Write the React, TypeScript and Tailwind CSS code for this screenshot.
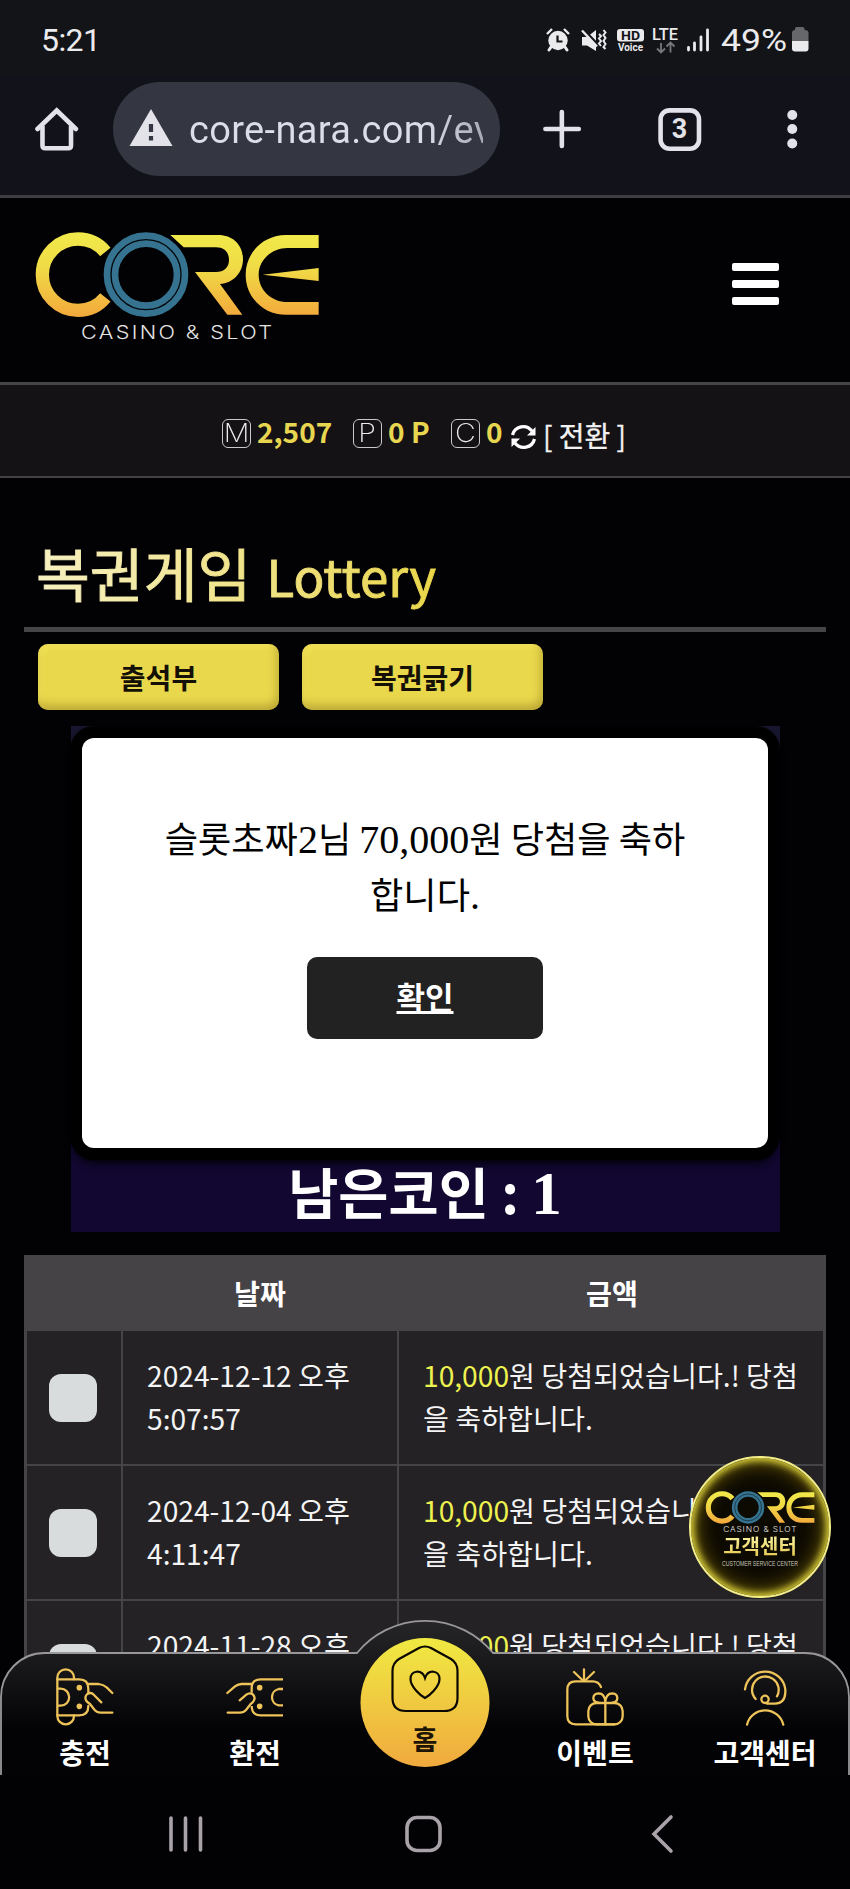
import type { ReactNode } from "react";

const rows = [
  { id: 1, date: "2024-12-12 오후", time: "5:07:57", amount: "10,000" },
  { id: 2, date: "2024-12-04 오후", time: "4:11:47", amount: "10,000" },
  { id: 3, date: "2024-11-28 오후", time: "6:32:10", amount: "10,000" },
];

const CoreLogo = ({ id, className }: { id: string; className?: string }) => (
  <svg viewBox="105 126 852 336" className={className}>
    <defs>
      <linearGradient id={id} gradientUnits="userSpaceOnUse" x1="0" y1="128" x2="0" y2="382">
        <stop offset="0" stopColor="#f1ea4a" />
        <stop offset="0.4" stopColor="#f0dc46" />
        <stop offset="1" stopColor="#f3a83c" />
      </linearGradient>
    </defs>
    <path
      d="M316 186 C296 161 267 147 234 147 C175 147 127 195 127 254 C127 313 175 361 234 361 C267 361 296 347 316 322"
      fill="none"
      stroke={`url(#${id})`}
      strokeWidth="40"
    />
    <path
      d="M511 135 H655 C700 135 729 166 729 208 C729 248 700 280 660 282 L727 374 H682 L585 246 H648 C672 246 687 232 687 209 C687 187 672 172 648 172 H551 Z"
      fill={`url(#${id})`}
    />
    <path
      d="M956 135 H858 C790 135 737 188 737 254 C737 322 790 374 858 374 H956 V336 H862 C815 336 776 300 776 254 C776 210 815 174 862 174 H956 Z M788 254 L956 234 V273 Z"
      fill={`url(#${id})`}
    />
    <circle cx="438" cy="254" r="105" fill="none" stroke="#357391" strokeWidth="44" />
    <circle cx="438" cy="254" r="105" fill="none" stroke="#04090c" strokeWidth="4" />
    <text
      x="243"
      y="447"
      textLength="580"
      lengthAdjust="spacingAndGlyphs"
      letterSpacing="6"
      fontSize="55"
      className="fill-[#e4e4e4] font-['Inter','Liberation_Sans',sans-serif] font-light"
    >
      CASINO &amp; SLOT
    </text>
  </svg>
);

const StatusBar = () => (
  <div className="flex h-[74px] items-center justify-between pt-1.5 pr-[38px] pl-[41px] font-['Roboto',sans-serif] text-[#ebebee]">
    <span className="text-[32px] leading-none tracking-[-0.6px]">5:21</span>
    <svg width="267" height="36" viewBox="0 -4 267 36" fill="currentColor">
      {/* alarm */}
      <circle cx="13" cy="14.5" r="9.7" />
      <path d="M2 8 L7 3 M24 8 L19 3" stroke="currentColor" strokeWidth="2.4" />
      <path d="M6 21 L4 24 M20 21 L22 24" stroke="currentColor" strokeWidth="3" strokeLinecap="round" />
      <path d="M12.5 9.5 V15.5 H17.5" stroke="#131417" strokeWidth="2.2" fill="none" />
      {/* muted, vibrating */}
      <path d="M37 11 H42 L51 4 V25 L42 19.5 H37 Z" />
      <path d="M37.5 2.5 L54 20" stroke="#131417" strokeWidth="2.6" />
      <path d="M37 4.5 L52 20.5" stroke="currentColor" strokeWidth="2.4" />
      <path
        d="M54 8 l2 2 -2 2.500 2 2.500 -2 2.500 2 2.500 M58.500 4 l2 2.500 -2 2.500 2 3 -2 3 2 3 -2 3 2 2"
        stroke="currentColor"
        strokeWidth="2"
        fill="none"
      />
      {/* HD voice */}
      <rect x="72" y="3" width="27" height="12.5" rx="3" />
      <text x="76" y="13.5" fontSize="12" fontWeight="700" textLength="19" lengthAdjust="spacingAndGlyphs" fill="#131417">
        HD
      </text>
      <text x="73" y="25" fontSize="10.5" fontWeight="700" textLength="25" lengthAdjust="spacingAndGlyphs">
        Voice
      </text>
      {/* network */}
      <text x="107" y="13.5" fontSize="16.5" fontWeight="500" textLength="26" lengthAdjust="spacingAndGlyphs">
        LTE
      </text>
      <path
        d="M116 17 V26 M112 22.5 L116 26.5 L120 22.5 M125.500 26.5 V17 M121.500 20.500 L125.500 16.500 L129.500 20.500"
        stroke="#77787b"
        strokeWidth="1.8"
        fill="none"
      />
      <path
        d="M143.500 21.500 V24 M149.500 17 V24 M156 11 V24 M162.500 4 V24"
        stroke="currentColor"
        strokeWidth="2.800"
        strokeLinecap="round"
      />
      <text x="176" y="25" fontSize="31.5" textLength="66" lengthAdjust="spacingAndGlyphs">
        49%
      </text>
      {/* battery */}
      <path d="M247 15 V7 Q247 4 250 4 V2.500 Q250 1 252 1 H257.500 Q259.500 1 259.500 2.500 V4 Q263.500 4 263.500 7 V15 Z" fill="#66676a" />
      <path d="M247 15 H263.500 V22.500 Q263.500 25.500 260.500 25.500 H250 Q247 25.500 247 22.500 Z" />
    </svg>
  </div>
);

const BrowserBar = () => (
  <div className="flex h-[124px] items-start border-b-[3px] border-[#3e3d41] bg-[#12131a] pt-2 pl-[35px] text-[#e3e2e9]">
    <svg width="44" height="94" viewBox="0 0 44 94" fill="none" stroke="currentColor" strokeWidth="4.600">
      <path d="M2.500 47 L21.800 28.500 L41 47" strokeLinecap="round" />
      <path d="M7.500 44 V63.500 Q7.500 66.300 10.300 66.300 H33.300 Q36.100 66.300 36.100 63.500 V44" />
    </svg>
    <div className="ml-[34px] flex h-[94px] w-[388px] items-center rounded-full bg-[#343741] pl-4">
      <svg width="44" height="38" viewBox="0 0 44 38" className="-mt-1 shrink-0">
        <path d="M22 1 L43.500 38 H0.500 Z" fill="currentColor" />
        <path d="M22 16 V24 M22 28 V32.500" stroke="#343741" strokeWidth="4.200" />
      </svg>
      <div className="ml-4 w-[294px] overflow-hidden bg-[linear-gradient(to_right,#dcdde9_80%,#a9abb7)] bg-clip-text pt-0.5 font-['Roboto',sans-serif] text-[38px] leading-[60px] tracking-[0.35px] whitespace-nowrap text-transparent">
        core-nara.com/event
      </div>
    </div>
    <svg width="350" height="94" viewBox="501 82 350 94" fill="none" stroke="currentColor" className="ml-px">
      <path d="M545.500 129 H579 M562 112 V146" strokeWidth="4.600" strokeLinecap="round" />
      <rect x="661" y="110.300" width="38.500" height="38.500" rx="9" strokeWidth="4.600" />
      <text
        x="680"
        y="138.500"
        fontSize="27"
        textAnchor="middle"
        stroke="none"
        className="fill-[#e3e2e9] font-['Roboto',sans-serif] font-bold"
      >
        3
      </text>
      <g fill="currentColor" stroke="none">
        <circle cx="793" cy="115" r="5" />
        <circle cx="793" cy="129" r="5" />
        <circle cx="793" cy="143.500" r="5" />
      </g>
    </svg>
  </div>
);

const SiteHeader = () => (
  <header className="flex h-[187px] items-start justify-between border-b-[3px] border-[#454447] pr-[71px] pl-[35px]">
    <CoreLogo id="core-header" className="mt-[34px] h-[112px] w-[284px]" />
    <button className="mt-[65px] flex w-[47px] flex-col gap-[9px]">
      <span className="h-2 w-full rounded-xs bg-white" />
      <span className="h-2 w-full rounded-xs bg-white" />
      <span className="h-2 w-full rounded-xs bg-white" />
    </button>
  </header>
);

const CoinBadge = ({ letter }: { letter: string }) => (
  <span className="mt-[5px] flex size-[29px] items-center justify-center rounded-md border-[1.5px] border-[#c9c9cb] font-['Inter',sans-serif] text-[26px] leading-none font-extralight text-[#ececec]">
    <span className="inline-block scale-x-110">{letter}</span>
  </span>
);

const BalanceBar = () => (
  <div className="flex h-[93px] items-center border-b-2 border-[#424144] bg-[#141215] pl-[222px] text-[28px] leading-[40px] text-[#e8d651]">
    <CoinBadge letter="M" />
    <b className="ml-[6px] w-[96px]">2,507</b>
    <CoinBadge letter="P" />
    <b className="ml-[6px] w-[63px]">0 P</b>
    <CoinBadge letter="C" />
    <b className="ml-[6px] w-[24px]">0</b>
    <svg width="27" height="26" viewBox="0 0 27 26" fill="none" stroke="#fff" strokeWidth="3.200" className="mt-3">
      <path d="M2.500 11 A11 11 0 0 1 22 7 M24.500 15 A11 11 0 0 1 5 19" />
      <path d="M25.500 3 V11.500 H17 Z M1.500 23 V14.500 H10 Z" fill="#fff" stroke="none" />
    </svg>
    <span className="mt-2 ml-[6px] text-[#f2f2f2] [-webkit-text-stroke:0.3px]">[ 전환 ]</span>
  </div>
);

const YellowButton = ({ children }: { children: ReactNode }) => (
  <button className="h-[66px] w-[241px] rounded-[10px] bg-[#e9d84c] text-[28px] leading-none font-bold text-[#141005] shadow-[inset_-2px_-5px_8px_rgba(120,95,20,0.4),inset_3px_3px_6px_rgba(255,240,100,0.6)]">
    {children}
  </button>
);

const HistoryTable = () => (
  <div className="mx-6 mt-[23px] border-x-[3px] border-[#454447] bg-[#242225] text-[28.200px] leading-[42.500px] text-[#f4f4f5]">
    <div className="-mx-[3px] grid h-[76px] grid-cols-[98px_276px_1fr] items-center bg-[#454346] pt-px text-center font-bold text-white">
      <span />
      <span>날짜</span>
      <span>금액</span>
    </div>
    {rows.map((row) => (
      <div key={row.id} className="grid h-[135px] grid-cols-[96px_276px_1fr] border-b-2 border-[#454447]">
        <div className="flex items-center justify-center border-r-2 border-[#454447] pr-0.5">
          <span className="size-12 rounded-xl bg-[#d9dcdd]" />
        </div>
        <div className="border-r-2 border-[#454447] pt-[23px] pl-6">
          {row.date}
          <br />
          {row.time}
        </div>
        <div className="pt-[23px] pl-6 whitespace-nowrap">
          <span className="text-[#eef24f]">{row.amount}</span>원 당첨되었습니다.! 당첨
          <br />을 축하합니다.
        </div>
      </div>
    ))}
  </div>
);

const WinModal = () => (
  <div className="absolute top-[540px] left-[82px] flex h-[410px] w-[686px] flex-col items-center rounded-xl bg-white shadow-[0_0_1px_12px_#000,0_6px_8px_8px_#000]">
    <p className="mt-[72px] text-center text-[36.200px] leading-[55.500px] text-black">
      슬롯초짜
      <Serif>2</Serif>님 <Serif>70,000</Serif>원 당첨을 축하
      <br />
      합니다<Serif>.</Serif>
    </p>
    <button className="mt-[36px] h-[82px] w-[236px] rounded-[10px] bg-[#222] pb-1 text-[31px] font-bold text-white underline decoration-3 underline-offset-2">
      확인
    </button>
  </div>
);

const Serif = ({ children }: { children: ReactNode }) => (
  <span className="font-['Liberation_Serif',serif] text-[40px] leading-[0]">{children}</span>
);

const SupportBadge = () => (
  <div className="absolute top-[1258px] left-[689px] flex size-[142px] flex-col items-center rounded-full border-2 border-[#f3ee8a] bg-[#0d0a02] pt-[33px] shadow-[inset_0_0_7px_3px_#d8cf3a,inset_0_0_18px_8px_rgba(120,100,10,0.7)]">
    <CoreLogo id="core-badge" className="h-[43px] w-[110px]" />
    <span className="bg-linear-to-b from-[#fdf6a8] to-[#e3c545] bg-clip-text text-[20px] leading-[24px] font-bold text-transparent">
      고객센터
    </span>
    <svg width="80" height="11" viewBox="0 0 80 11">
      <text
        x="2"
        y="8"
        fontSize="6.500"
        textLength="76"
        lengthAdjust="spacingAndGlyphs"
        fill="#c9c6b8"
        className="font-['Liberation_Sans',sans-serif]"
      >
        CUSTOMER SERVICE CENTER
      </text>
    </svg>
  </div>
);

const NavIcon = ({ children, viewBox }: { children: ReactNode; viewBox: string }) => (
  <svg
    width="58"
    height="58"
    viewBox={viewBox}
    fill="none"
    stroke="#eec45a"
    strokeWidth="6.800"
    strokeLinecap="round"
    strokeLinejoin="round"
  >
    {children}
  </svg>
);

const navItems = [
  {
    label: "충전",
    icon: (
      <NavIcon viewBox="170 206 174 174">
        <path d="M174 235 A25 25 0 0 1 224 235 V240 M174 235 V350 A25 25 0 0 0 224 350 V348" />
        <path d="M174 240 H240 Q267 240 267 268 V280 M174 348 H240 Q267 348 267 320" />
        <path d="M176 268 H184 A25 25 0 0 1 184 319 H176" />
        <path d="M265 254 H298 Q312 256 322 264 L339 281" />
        <path d="M306 309 L281 284 Q273 278 264 284 Q255 292 260 303 Q263 308 272 314 L286 332 Q293 340 304 340 H339" />
        <circle cx="240" cy="265" r="5" fill="#eec45a" />
        <circle cx="240" cy="321" r="5" fill="#eec45a" />
      </NavIcon>
    ),
  },
  {
    label: "환전",
    icon: (
      <NavIcon viewBox="678 206 174 174">
        <path d="M849 240 H782 Q755 240 755 266 V280 M849 348 H782 Q755 348 755 320" strokeLinecap="butt" />
        <path d="M849 269 H836 A25 25 0 0 0 836 318 H849" strokeLinecap="butt" />
        <path d="M682 281 L704 262 Q712 255 724 254 H754" />
        <path d="M719 303 L739 286 Q748 279 757 284 Q767 292 762 303 Q760 308 752 314 L738 332 Q731 340 720 340 H683" />
        <circle cx="779" cy="265" r="5" fill="#eec45a" />
        <circle cx="779" cy="321" r="5" fill="#eec45a" />
      </NavIcon>
    ),
  },
  { label: "홈", icon: null },
  {
    label: "이벤트",
    icon: (
      <NavIcon viewBox="424 206 174 174">
        <path d="M478 210 V242 M448 218 L473 242 M508 218 L483 242" />
        <path d="M529 263 Q522 246 504 246 H453 Q428 246 428 271 V350 Q428 375 453 375 H570" />
        <rect x="491" y="311" width="103" height="64" rx="24" />
        <path d="M542 311 V375 M542 308 Q540 282 522 282 Q506 283 506 297 Q507 308 522 310 M542 308 Q544 282 563 282 Q578 283 578 297 Q577 308 563 310" />
      </NavIcon>
    ),
  },
  {
    label: "고객센터",
    icon: (
      <NavIcon viewBox="933 206 174 174">
        <path d="M960 270 A61 61 0 0 1 1081 270 V280 Q1079 313 1050 313 H1026" />
        <path d="M992 299 A40 40 0 1 1 1056 291" />
        <circle cx="1020" cy="300" r="11" />
        <path d="M966 376 A56 56 0 0 1 1075 376" />
      </NavIcon>
    ),
  },
];

const BottomNav = () => (
  <nav className="absolute bottom-0 left-0 h-[156px] w-full">
    <svg width="850" height="156" viewBox="0 0 850 156" className="absolute inset-0">
      <defs>
        <linearGradient id="nav-bg" x1="0" y1="0" x2="0" y2="1">
          <stop offset="0" stopColor="#262528" />
          <stop offset="0.35" stopColor="#151416" />
          <stop offset="0.7" stopColor="#030204" />
        </linearGradient>
        <linearGradient id="nav-home" x1="0" y1="0" x2="0" y2="1">
          <stop offset="0" stopColor="#f0ea42" />
          <stop offset="1" stopColor="#f0a93e" />
        </linearGradient>
      </defs>
      <path
        d="M1 156 V78 C1 54 20 34 45 34 H357 A88 88 0 0 1 493 34 H805 C830 34 849 54 849 78 V156"
        fill="url(#nav-bg)"
        stroke="#98979a"
        strokeWidth="1.800"
      />
      <circle cx="425" cy="83.500" r="64.500" fill="url(#nav-home)" />
    </svg>
    <div className="relative grid h-full grid-cols-5 text-[28px] leading-[40px] font-bold text-white">
      {navItems.map((item) =>
        item.icon ? (
          <a key={item.label} className="flex flex-col items-center pt-[49px]">
            {item.icon}
            <span className="mt-[6px]">{item.label}</span>
          </a>
        ) : (
          <a key={item.label} className="flex flex-col items-center pt-[26px] text-[27px] text-[#1c1404]">
            <svg width="68" height="68" viewBox="0 0 68 68" fill="none" stroke="#0a0700" strokeWidth="2.200">
              <path d="M28 3 Q34 0 40 3 L60 14 Q66.500 18 66.500 26 V53 Q66.500 66 53 66 H15 Q1.500 66 1.500 53 V26 Q1.500 18 8 14 Z" />
              <path d="M34 53 C30 51 19.500 42 19.500 34 C19.500 25 31 24 34 33 C37 24 48.500 25 48.500 34 C48.500 42 38 51 34 53 Z" />
            </svg>
            <span className="mt-[6px]">{item.label}</span>
          </a>
        )
      )}
    </div>
  </nav>
);

const SystemNav = () => (
  <div className="h-[114px] bg-[#020103]">
    <svg width="850" height="114" viewBox="0 1775 850 114" fill="none" stroke="#a9a3a9" strokeWidth="3.600">
      <path d="M171 1818 V1850 M185.500 1818 V1850 M200.500 1818 V1850" strokeLinecap="round" />
      <rect x="407" y="1817.500" width="33" height="33" rx="10" />
      <path d="M671 1817 L654 1834 L671 1851" strokeLinecap="round" />
    </svg>
  </div>
);

const App = () => {
  return (
    <div className="flex h-[1889px] w-[850px] flex-col overflow-hidden bg-[#131417] font-['Noto_Sans_CJK_KR',sans-serif]">
      <StatusBar />
      <BrowserBar />
      <main className="relative h-[1577px] overflow-hidden bg-[#020103]">
        <SiteHeader />
        <BalanceBar />
        <div className="mx-6 h-[154px] border-b-[5px] border-[#454447] pt-[52px] pl-3">
          <h1 className="w-fit bg-linear-to-r from-[#f7f0c0] to-[#ead648] bg-clip-text text-[58.500px] leading-[84px] text-transparent [-webkit-text-stroke:1px_transparent]">
            복권게임 <span className="ml-[2px] text-[51px]">Lottery</span>
          </h1>
        </div>
        <div className="mt-3 ml-[38px] flex gap-[23px]">
          <YellowButton>출석부</YellowButton>
          <YellowButton>복권긁기</YellowButton>
        </div>
        <div className="mx-auto mt-4 flex h-[506px] w-[709px] items-end justify-center bg-linear-to-b from-[#17162e] to-[#110730] to-60% text-[54.500px] leading-[82px] font-bold text-white">
          <p>
            남은코인 : <span className="font-['Liberation_Serif',serif] text-[61px] leading-[0]">1</span>
          </p>
        </div>
        <HistoryTable />
        <WinModal />
        <SupportBadge />
        <BottomNav />
      </main>
      <SystemNav />
    </div>
  );
};

export default App;
